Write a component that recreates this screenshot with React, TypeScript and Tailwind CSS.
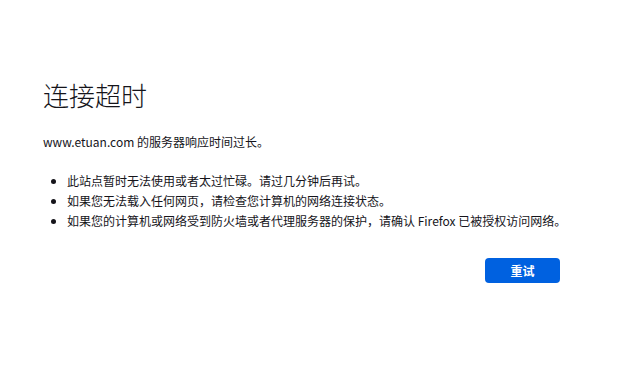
export default function App() {
  return (
    <div className="w-[626px] h-[386px] bg-white text-[#15141a]" style={{ fontFamily: '"Noto Sans CJK SC", sans-serif' }}>
      <div className="pl-[43px] pt-[77px] w-[610px]">
        <h1 className="text-[26px] font-light leading-[36px] m-0">连接超时</h1>
        <p className="mt-[19px] text-[12px] leading-[20px]">www.etuan.com 的服务器响应时间过长。</p>
        <ul className="mt-[19px] pl-[24px] list-disc text-[12px] leading-[20px]">
          <li>此站点暂时无法使用或者太过忙碌。请过几分钟后再试。</li>
          <li>如果您无法载入任何网页，请检查您计算机的网络连接状态。</li>
          <li>如果您的计算机或网络受到防火墙或者代理服务器的保护，请确认 Firefox 已被授权访问网络。</li>
        </ul>
        <div className="flex mt-[27px] pl-[442px]">
          <button className="w-[75px] h-[25px] rounded-[4px] bg-[#0061e0] text-white text-[12px] font-bold">重试</button>
        </div>
      </div>
    </div>
  );
}
